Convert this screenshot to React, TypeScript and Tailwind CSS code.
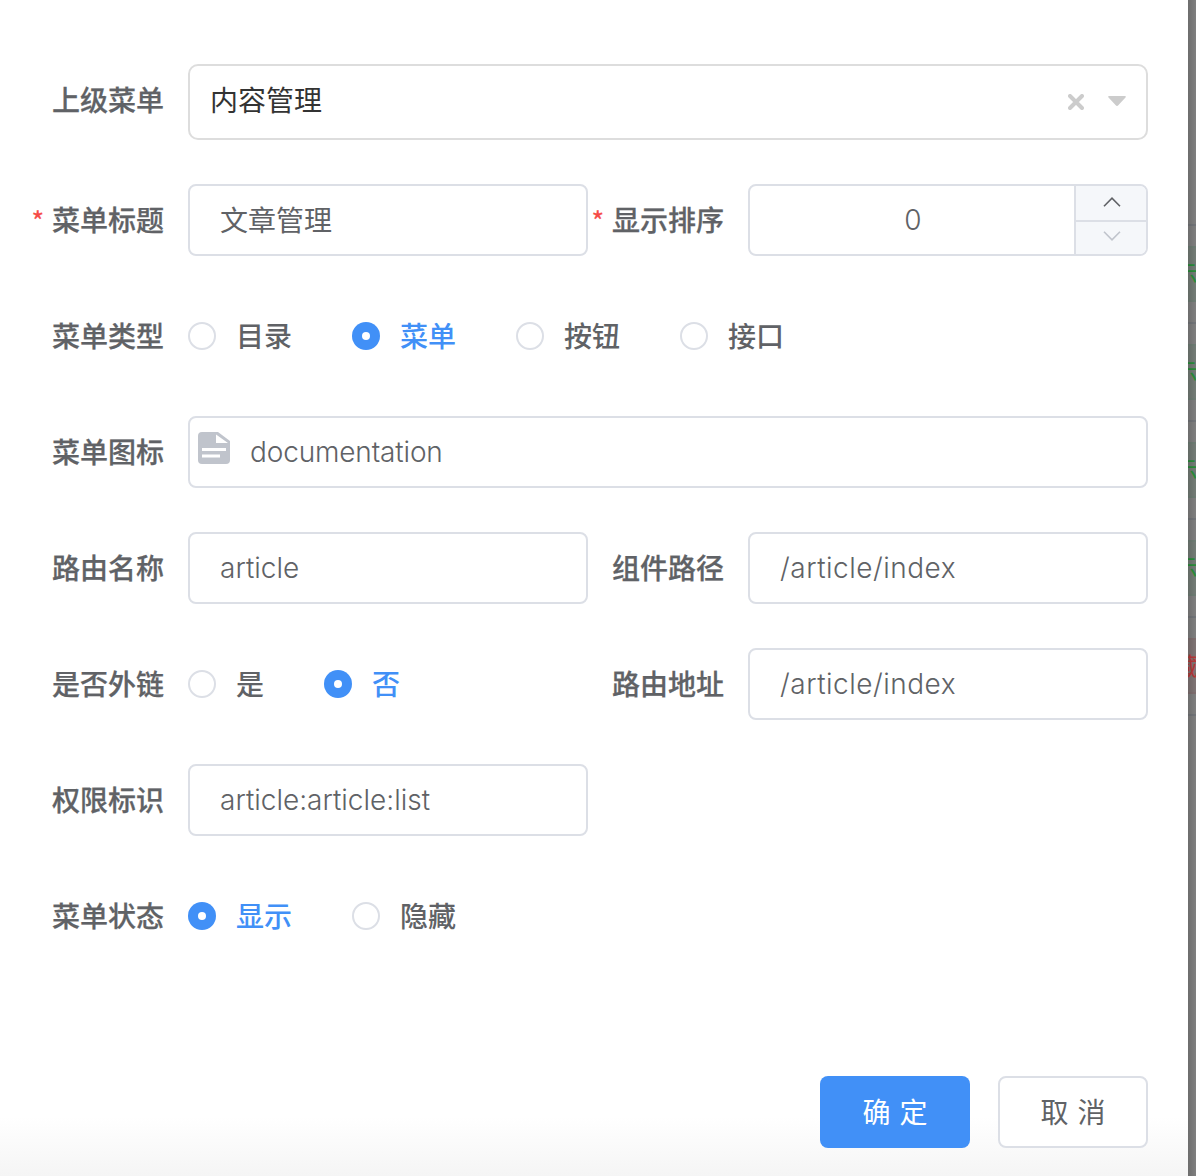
import React from "react";

type FieldProps = {
  label: string;
  required?: boolean;
  children: React.ReactNode;
};

function Field({ label, required, children }: FieldProps) {
  return (
    <div className="flex h-[72px] items-center">
      <div className="flex w-[160px] shrink-0 items-center justify-end pt-[2px] pr-6 font-medium whitespace-nowrap [-webkit-text-stroke:0.25px]">
        {required && (
          <span className="mr-2 h-[40px] text-[27px] leading-[40px] font-normal text-[#f64b46] [font-family:'Noto_Sans_CJK_SC',sans-serif]">
            *
          </span>
        )}
        <span className="leading-[40px]">{label}</span>
      </div>
      <div className="min-w-0 flex-1">{children}</div>
    </div>
  );
}

function TextBox({ value, textClass = "pt-[2px]" }: { value: string; textClass?: string }) {
  return (
    <div className="flex h-[72px] items-center rounded-lg border-2 border-[#dcdfe6] bg-white px-[30px]">
      <span className={`leading-[40px] ${textClass}`}>{value}</span>
    </div>
  );
}

function Radios({ options, selected }: { options: string[]; selected: string }) {
  return (
    <div className="flex items-center gap-[60px]">
      {options.map((option) => (
        <div key={option} className="flex items-center gap-5">
          {option === selected ? (
            <span className="flex size-7 items-center justify-center rounded-full bg-[#4190f7]">
              <span className="size-2 rounded-full bg-white" />
            </span>
          ) : (
            <span className="size-7 rounded-full border-2 border-[#dcdfe6] bg-white" />
          )}
          <span
            className={
              option === selected
                ? "pt-[2px] leading-[40px] font-medium text-[#4190f7]"
                : "pt-[2px] leading-[40px] font-medium"
            }
          >
            {option}
          </span>
        </div>
      ))}
    </div>
  );
}

function Select({ value }: { value: string }) {
  return (
    <div className="flex h-[76px] items-center rounded-[10px] border-2 border-[#dddddd] bg-white pr-5 pl-5">
      <span className="-mt-[2px] flex-1 leading-[40px] text-[#333333]">{value}</span>
      <svg className="mr-6 size-4" viewBox="0 0 16 16" fill="none" stroke="#cccccc" strokeWidth="4" strokeLinecap="round">
        <path d="M2 2l12 12M14 2L2 14" />
      </svg>
      <svg className="-mt-[2px] h-[10px] w-[18px]" viewBox="0 0 18 10" fill="#cccccc">
        <path d="M1 0H17Q18.4 .3 17.5 1.5L10.5 9Q9 10.8 7.5 9L.5 1.5Q-.4 .3 1 0Z" />
      </svg>
    </div>
  );
}

function Chevron({ up, color }: { up?: boolean; color: string }) {
  return (
    <svg className="h-[10px] w-[18px]" viewBox="0 0 18 10" fill="none" stroke={color} strokeWidth="1.6">
      <path d={up ? "M1 9.2L9 1.2L17 9.2" : "M1 .8L9 8.8L17 .8"} />
    </svg>
  );
}

function NumberBox({ value }: { value: number }) {
  return (
    <div className="flex h-[72px] overflow-hidden rounded-lg border-2 border-[#dcdfe6] bg-white">
      <div className="flex flex-1 items-center justify-center pl-[2px]">
        <span className="leading-[40px] font-[350]">{value}</span>
      </div>
      <div className="flex w-[72px] shrink-0 flex-col border-l-2 border-[#dcdfe6] bg-[#f5f7fa]">
        <div className="flex h-[36px] items-center justify-center border-b-2 border-[#dcdfe6] pb-[2px] pl-[2px]">
          <Chevron up color="#606266" />
        </div>
        <div className="flex flex-1 items-start justify-center pt-[9px] pl-[2px]">
          <Chevron color="#c0c4cc" />
        </div>
      </div>
    </div>
  );
}

function IconBox({ value }: { value: string }) {
  return (
    <div className="flex h-[72px] items-center rounded-lg border-2 border-[#dcdfe6] bg-white pl-2">
      <svg className="mt-[-8px] mr-5 size-8" viewBox="0 0 32 32">
        <path fill="#c0c4cc" d="M4 0H20L32 9V28a4 4 0 0 1-4 4H4a4 4 0 0 1-4-4V4a4 4 0 0 1 4-4Z" />
        <path fill="#fff" d="M18 2.5V11H30ZM4 16H28V19H4ZM4 22.5H22V25.5H4Z" />
      </svg>
      <span className="leading-[40px] font-[350] tracking-[-0.15px]">{value}</span>
    </div>
  );
}

const tableRows = ["显示", "显示", "显示", "显示", "隐藏"];

function Backdrop() {
  return (
    <div className="relative w-2 shrink-0 overflow-hidden bg-[#808080] pt-[226px]">
      {tableRows.map((status, i) => (
        <div key={i} className="flex h-[98px] items-start justify-end border-b-2 border-[#73767a] pt-5">
          <div
            className={
              status === "显示"
                ? "-mr-5 flex h-14 shrink-0 items-center border-y-2 border-[#6f7e75] bg-[#747d77] pt-px pr-[18px] text-[24px] whitespace-nowrap text-[#2a8f3a]"
                : "-mr-5 flex h-14 shrink-0 items-center border-y-2 border-[#806f70] bg-[#807575] pt-px pr-[18px] text-[24px] whitespace-nowrap text-[#b83a3a]"
            }
          >
            {status}
          </div>
        </div>
      ))}
      <div className="absolute inset-x-0 top-[224px] h-[2px] bg-[#73767a]" />
      <div className="absolute inset-0 bg-linear-to-r from-black/15 to-transparent" />
    </div>
  );
}

export default function App() {
  return (
    <div className="flex h-[1176px] w-[1196px] overflow-hidden bg-white font-['Inter','Noto_Sans_CJK_SC',sans-serif] text-[28px] text-[#606266]">
      <div className="flex w-[1188px] shrink-0 flex-col bg-linear-to-b from-white from-[95%] to-[#f5f5f5] pt-[64px] pr-10 pl-7">
        <div className="mb-[44px] flex h-[76px] w-[1120px]">
          <div className="w-[160px] shrink-0 pt-[17px] pr-6 text-right leading-[40px] font-medium [-webkit-text-stroke:0.25px]">
            上级菜单
          </div>
          <div className="flex-1">
            <Select value="内容管理" />
          </div>
        </div>
        <div className="grid w-[1120px] grid-cols-2 gap-y-[44px]">
          <Field label="菜单标题" required>
            <TextBox value="文章管理" />
          </Field>
          <Field label="显示排序" required>
            <NumberBox value={0} />
          </Field>
          <div className="col-span-2">
            <Field label="菜单类型">
              <Radios options={["目录", "菜单", "按钮", "接口"]} selected="菜单" />
            </Field>
          </div>
          <div className="col-span-2">
            <Field label="菜单图标">
              <IconBox value="documentation" />
            </Field>
          </div>
          <Field label="路由名称">
            <TextBox value="article" textClass="font-[350]" />
          </Field>
          <Field label="组件路径">
            <TextBox value="/article/index" textClass="font-[350] tracking-[0.5px]" />
          </Field>
          <Field label="是否外链">
            <Radios options={["是", "否"]} selected="否" />
          </Field>
          <Field label="路由地址">
            <TextBox value="/article/index" textClass="font-[350] tracking-[0.5px]" />
          </Field>
          <div className="col-span-2 w-[560px]">
            <Field label="权限标识">
              <TextBox value="article:article:list" textClass="font-[350]" />
            </Field>
          </div>
          <div className="col-span-2">
            <Field label="菜单状态">
              <Radios options={["显示", "隐藏"]} selected="显示" />
            </Field>
          </div>
        </div>
        <div className="mt-[124px] flex w-[1120px] justify-end gap-7">
          <button className="h-[72px] w-[150px] rounded-lg bg-[#4190f7] pt-[2px] [word-spacing:1px] text-white">确 定</button>
          <button className="h-[72px] w-[150px] rounded-lg border-2 border-[#dcdfe6] bg-white pt-[2px] [word-spacing:1px]">取 消</button>
        </div>
      </div>
      <Backdrop />
    </div>
  );
}
